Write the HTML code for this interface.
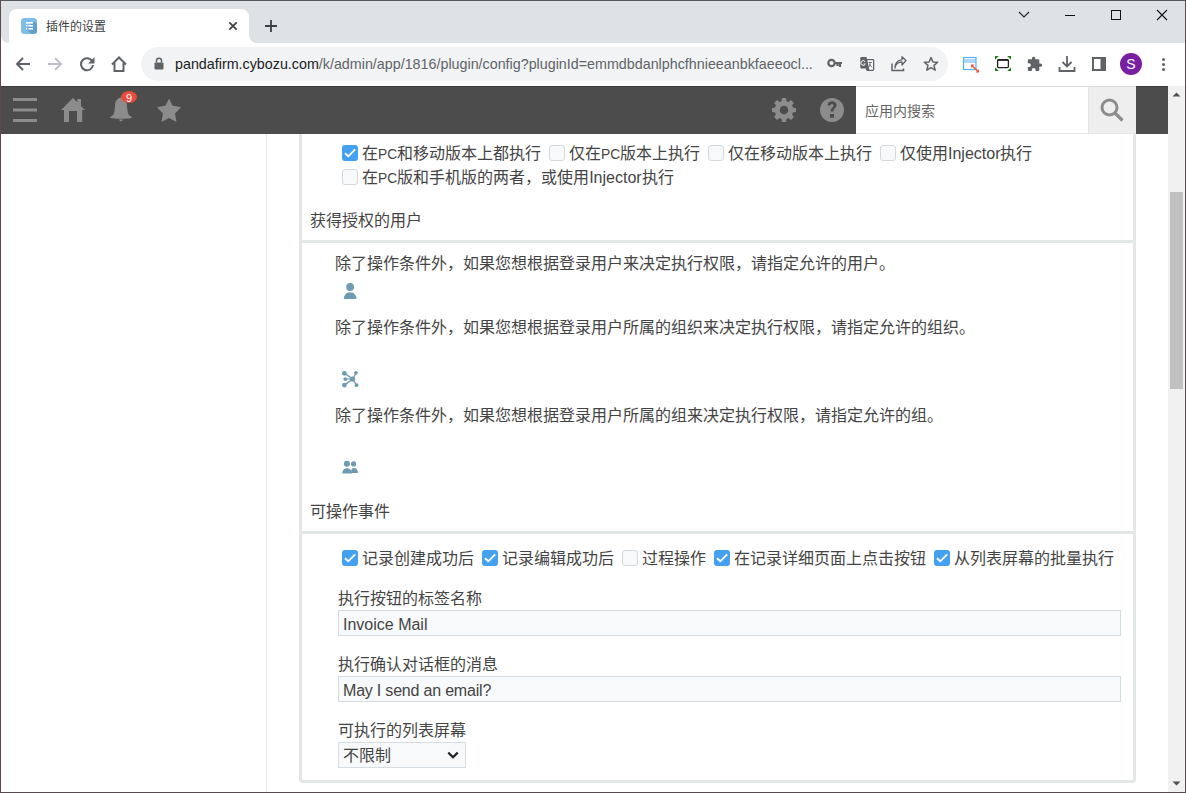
<!DOCTYPE html>
<html lang="zh-CN"><head><meta charset="utf-8">
<style>
*{margin:0;padding:0;box-sizing:border-box}
html,body{width:1186px;height:793px;overflow:hidden;background:#fff;font-family:"Liberation Sans",sans-serif;color:#333}
.a{position:absolute}
#frame{position:absolute;left:0;top:0;width:1186px;height:793px;border:1px solid #5e4a4a;border-top-color:#565a5c;pointer-events:none;z-index:50}
#tabstrip{position:absolute;left:0;top:0;width:1186px;height:43px;background:#dee1e6}
#tab{position:absolute;left:9px;top:9px;width:240px;height:34px;background:#fff;border-radius:8px 8px 0 0}
.tabfl{position:absolute;top:34px;width:8px;height:8px;background:#fff}
.tabfl:after{content:"";position:absolute;left:0;top:0;width:8px;height:8px;background:#dee1e6}
#toolbar{position:absolute;left:0;top:43px;width:1186px;height:43px;background:#fff}
#omni{position:absolute;left:141px;top:47px;width:807px;height:34px;background:#f1f3f4;border-radius:17px}
#url{position:absolute;left:175px;top:56px;font-size:14.3px;color:#202124;white-space:nowrap;letter-spacing:0}
#url span{color:#5f6368}
#kh{position:absolute;z-index:4;left:0;top:86px;width:1168px;height:48px;background:#4c4c4c;border-top:1px solid #3c3c3c}
#search{position:absolute;z-index:4;left:856px;top:86px;width:232px;height:48px;background:#fff;border-top:1px solid #d9dcde;border-bottom:1px solid #e3e7e8}
#sbtn{position:absolute;z-index:4;left:1088px;top:86px;width:48px;height:48px;background:#eeeeee;border-left:1px solid #e3e6e8;border-top:1px solid #d9dcde;border-bottom:1px solid #e3e7e8}
#scroll{position:absolute;left:1168px;top:86px;width:17px;height:707px;background:#f1f1f1}
#thumb{position:absolute;left:1170px;top:192px;width:13px;height:197px;background:#c1c1c1}
#side{position:absolute;left:266px;top:134px;width:1px;height:659px;background:#e6e9ea}
.pbox{position:absolute;border:3px solid #e3e7e8;background:#fff}
.t{position:absolute;margin-top:1px;font-size:16px;white-space:nowrap;line-height:20px;color:#444}
.cb{position:absolute;width:16px;height:16px;border-radius:3px}
.cb.on{background:#44a0f0}
.pc{font-size:13.8px}
.cb svg{position:absolute;left:0;top:0}
.cb.off{background:#f7f9fb;border:1px solid #d3d9dd}
.inp{position:absolute;left:338px;width:783px;height:26px;background:#f7f9fa;border:1px solid #d5dde2}
</style></head><body>
<div id="tabstrip"></div>
<div id="tab"></div>
<svg class="a" style="left:1px;top:35px" width="8" height="8"><path d="M0 0 H0 V8 H8 A8 8 0 0 1 0 0Z" fill="#fff"/></svg>
<svg class="a" style="left:249px;top:35px" width="8" height="8"><path d="M8 8 H0 V0 A8 8 0 0 0 8 8Z" fill="#fff"/></svg>
<svg class="a" style="left:21px;top:18px" width="16" height="16" viewBox="0 0 16 16"><rect x="0" y="0" width="16" height="16" rx="3.5" fill="#7dbde8"/><path d="M5 11 L13 3 L16 6 V12.5 A3.5 3.5 0 0 1 12.5 16 H10 Z" fill="#5d9dcb" opacity="0.9"/><rect x="5" y="4" width="7" height="1.6" fill="#fff"/><rect x="5" y="7" width="1.4" height="1.6" fill="#fff"/><rect x="7.4" y="7" width="4.6" height="1.6" fill="#fff"/><rect x="5" y="10" width="1.4" height="1.6" fill="#fff"/><rect x="7.4" y="10" width="4.6" height="1.6" fill="#fff"/></svg>
<div class="a" style="left:46px;top:19px;font-size:12px;line-height:16px;color:#3c4043;white-space:nowrap">插件的设置</div>
<svg class="a" style="left:226px;top:19px" width="14" height="14" viewBox="0 0 14 14"><path d="M3.3 3.3 L10.7 10.7 M10.7 3.3 L3.3 10.7" stroke="#3c4043" stroke-width="1.7"/></svg>
<svg class="a" style="left:263px;top:18px" width="16" height="16" viewBox="0 0 16 16"><path d="M8 2 V14 M2 8 H14" stroke="#3c4043" stroke-width="1.8"/></svg>
<svg class="a" style="left:1017px;top:10px" width="14" height="10" viewBox="0 0 14 10"><path d="M2 2 L7 7 L12 2" stroke="#202124" stroke-width="1.1" fill="none"/></svg>
<div class="a" style="left:1065px;top:15px;width:10px;height:1px;background:#111"></div>
<div class="a" style="left:1111px;top:10px;width:10px;height:10px;border:1px solid #111"></div>
<svg class="a" style="left:1156px;top:9px" width="12" height="12" viewBox="0 0 12 12"><path d="M1 1 L11 11 M11 1 L1 11" stroke="#111" stroke-width="1.1"/></svg>
<div id="toolbar"></div>
<svg class="a" style="left:15px;top:56px" width="16" height="16" viewBox="0 0 16 16"><path d="M15 8 H2.5 M8 2 L2 8 L8 14" stroke="#5f6368" stroke-width="2" fill="none"/></svg>
<svg class="a" style="left:47px;top:56px" width="16" height="16" viewBox="0 0 16 16"><path d="M1 8 H13.5 M8 2 L14 8 L8 14" stroke="#bdc1c6" stroke-width="2" fill="none"/></svg>
<svg class="a" style="left:79px;top:56px" width="16" height="16" viewBox="0 0 16 16"><path d="M13.2 5.2 A6 6 0 1 0 14 9" stroke="#5f6368" stroke-width="2" fill="none"/><path d="M15.5 1 V7.5 H9 Z" fill="#5f6368"/></svg>
<svg class="a" style="left:110px;top:55px" width="18" height="18" viewBox="0 0 18 18"><path d="M2 9.5 L9 2.5 L16 9.5 M4.5 8 V16 H13.5 V8" stroke="#5f6368" stroke-width="2" fill="none" stroke-linejoin="miter"/></svg>
<div id="omni"></div>
<svg class="a" style="left:154px;top:57px" width="10" height="13" viewBox="0 0 10 13"><path d="M2.5 5.5 V3.8 A2.5 2.5 0 0 1 7.5 3.8 V5.5" stroke="#5f6368" stroke-width="1.5" fill="none"/><rect x="0.5" y="5.5" width="9" height="7" rx="1" fill="#5f6368"/></svg>
<div id="url">pandafirm.cybozu.com<span>/k/admin/app/1816/plugin/config?pluginId=emmdbdanlphcfhnieeanbkfaeeocl...</span></div>
<svg class="a" style="left:827px;top:56px" width="16" height="16" viewBox="0 0 16 16"><circle cx="4.5" cy="7" r="3.2" stroke="#5f6368" stroke-width="2.2" fill="none"/><path d="M7.5 7 H15 M13 7 V11 M10.5 7 V10" stroke="#5f6368" stroke-width="2.2"/></svg>
<svg class="a" style="left:855px;top:52px" width="25" height="24" viewBox="855 52 25 24"><rect x="866.6" y="59.6" width="7" height="10.8" rx="0.8" fill="#fff" stroke="#5f6368" stroke-width="1.3"/><path d="M861.3 57 H865.8 A1 1 0 0 1 866.8 58 L869.5 70.6 H867 L866 68.6 H861.3 A1 1 0 0 1 860.3 67.6 V58 A1 1 0 0 1 861.3 57Z" fill="#5f6368"/><path d="M865 61.5 A2.3 2.3 0 1 0 865.3 64 H863.5" stroke="#fff" stroke-width="1" fill="none"/><path d="M868.5 62.5 H872 M870.2 62 C870 65 869 67 868 68 M869.5 64 L872 67.5" stroke="#5f6368" stroke-width="0.9" fill="none"/></svg>
<svg class="a" style="left:891px;top:56px" width="16" height="16" viewBox="0 0 16 16"><path d="M1 7.5 V14.5 H12.5 V12.5" stroke="#5f6368" stroke-width="1.5" fill="none"/><path d="M4 12 C4.5 8 7 6 11 6 V9 L15 4.5 L11 0.8 V3.8 C6 4 4 8 4 12Z" fill="none" stroke="#5f6368" stroke-width="1.3" stroke-linejoin="round"/></svg>
<svg class="a" style="left:923px;top:56px" width="16" height="16" viewBox="0 0 16 16"><path d="M8 1.5 L9.9 6 L14.7 6.3 L11 9.4 L12.2 14.2 L8 11.6 L3.8 14.2 L5 9.4 L1.3 6.3 L6.1 6Z" stroke="#5f6368" stroke-width="1.5" fill="none" stroke-linejoin="round"/></svg>
<svg class="a" style="left:962px;top:56px" width="18" height="17" viewBox="0 0 18 17"><rect x="1.5" y="1.5" width="12.5" height="12" fill="#fff" stroke="#58b0f0" stroke-width="1.2"/><path d="M1.5 4 H14 M1.5 6 H14" stroke="#58b0f0" stroke-width="1"/><path d="M10 9.5 L16 15.5" stroke="#f05a40" stroke-width="1.6"/><path d="M9 8.5 H12.5 L9 12Z M17 16.5 H13.5 L17 13Z" fill="#f05a40"/></svg>
<svg class="a" style="left:994px;top:55px" width="18" height="17" viewBox="994 55 18 17"><path d="M995 56 H998.8 L995 59.8Z M1011 56 H1007.2 L1011 59.8Z M995 71 H998.8 L995 67.2Z M1011 71 H1007.2 L1011 67.2Z" fill="#1e7a1e"/><rect x="997.6" y="59.6" width="10.8" height="8" rx="1" stroke="#222" stroke-width="1.3" fill="none"/><path d="M997.6 60.3 H1008.4" stroke="#222" stroke-width="1.2"/></svg>
<svg class="a" style="left:1027px;top:56px" width="16" height="16" viewBox="0 0 16 16"><path d="M13.5 7.5 H12.3 V4.3 A1 1 0 0 0 11.3 3.3 H8.3 V2 A1.7 1.7 0 0 0 5 2 V3.3 H1.8 A1 1 0 0 0 0.8 4.3 V7.2 H2 A1.9 1.9 0 0 1 2 11 H0.8 V14 A1 1 0 0 0 1.8 15 H4.8 V13.8 A1.9 1.9 0 0 1 8.6 13.8 V15 H11.3 A1 1 0 0 0 12.3 14 V10.8 H13.5 A1.65 1.65 0 0 0 13.5 7.5Z" fill="#5f6368"/></svg>
<svg class="a" style="left:1058px;top:55px" width="18" height="18" viewBox="0 0 18 18"><path d="M9 1 V11.5 M4.5 7 L9 11.5 L13.5 7" stroke="#5f6368" stroke-width="1.8" fill="none"/><path d="M1.5 12 V16 H16.5 V12" stroke="#5f6368" stroke-width="1.8" fill="none"/></svg>
<svg class="a" style="left:1092px;top:57px" width="14" height="14" viewBox="0 0 14 14"><rect x="1" y="1" width="12" height="12" fill="none" stroke="#5f6368" stroke-width="2"/><rect x="8.5" y="1" width="4.5" height="12" fill="#5f6368"/></svg>
<div class="a" style="left:1120px;top:53px;width:22px;height:22px;border-radius:50%;background:#7b1fa2;color:#fff;font-size:14px;line-height:22px;text-align:center">S</div>
<div class="a" style="left:1161.5px;top:58px;width:3px;height:3px;border-radius:50%;background:#5f6368"></div>
<div class="a" style="left:1161.5px;top:63px;width:3px;height:3px;border-radius:50%;background:#5f6368"></div>
<div class="a" style="left:1161.5px;top:68px;width:3px;height:3px;border-radius:50%;background:#5f6368"></div>
<div id="kh"></div>
<div id="search"></div>
<div id="sbtn"></div>
<div id="scroll"></div>
<div id="thumb"></div>
<svg class="a" style="left:1168px;top:86px;z-index:6" width="17" height="17"><path d="M4.5 10.5 H12.5 L8.5 6.5Z" fill="#505050"/></svg>
<svg class="a" style="left:1168px;top:775px;z-index:6" width="17" height="17"><path d="M4.5 6.5 H12.5 L8.5 10.5Z" fill="#505050"/></svg>
<div id="side"></div>

<!-- panels -->
<div class="pbox" style="left:299px;top:100px;width:837px;height:143px"></div>
<div class="pbox" style="left:299px;top:240px;width:837px;height:294px"></div>
<div class="pbox" style="left:299px;top:531px;width:837px;height:252px;border-radius:0 0 4px 4px"></div>

<svg class="a" style="left:0;top:86px;z-index:5" width="1168" height="48" viewBox="0 86 1168 48">
<rect x="13" y="98" width="24" height="3" fill="#8c8c8c"/>
<rect x="13" y="108.5" width="24" height="3" fill="#8c8c8c"/>
<rect x="13" y="119" width="24" height="3" fill="#8c8c8c"/>
<path d="M61 110 L73 98 L77.3 102.3 V99 H81 V106 L85 110 H82.2 V122 H77 V111 H69 V122 H64 V110 Z" fill="#8c8c8c"/>
<path d="M121 97.5 C124 98 126.5 100.5 126.8 104 C127.2 108 127.3 112 128.5 114.5 C129.5 116 132 116.5 132 117.5 C132 118.3 127 118.8 121 118.8 C115 118.8 110 118.3 110 117.5 C110 116.5 112.5 116 113.5 114.5 C114.7 112 114.8 108 115.2 104 C115.5 100.5 118 98 121 97.5Z" fill="#8c8c8c"/>
<path d="M118.5 119.5 H123.5 L121 121.8Z" fill="#8c8c8c"/>
<ellipse cx="129" cy="97" rx="8" ry="6" fill="#e74c3c"/>
<text x="129" y="101.5" font-size="11" fill="#fff" text-anchor="middle" font-family="Liberation Sans">9</text>
<path d="M169 98.4 L172.4 105.4 L181 107.2 L175 113.4 L176.5 122 L169 118.1 L161.5 122 L163 113.4 L157 107.2 L165.6 105.4Z" fill="#8c8c8c"/>
<g transform="translate(784 110)" fill="#8c8c8c">
<circle r="9.3"/>
<g id="tooth"><rect x="-2.3" y="-12" width="4.6" height="5" rx="1"/></g>
<use href="#tooth" transform="rotate(45)"/><use href="#tooth" transform="rotate(90)"/><use href="#tooth" transform="rotate(135)"/><use href="#tooth" transform="rotate(180)"/><use href="#tooth" transform="rotate(225)"/><use href="#tooth" transform="rotate(270)"/><use href="#tooth" transform="rotate(315)"/>
<circle r="4.3" fill="#4c4c4c"/>
</g>
<circle cx="832" cy="110" r="12" fill="#8c8c8c"/>
<path d="M827.5 105.5 C827.5 102.8 829.5 101.3 832 101.3 C834.8 101.3 836.6 103 836.6 105.3 C836.6 107.8 833.6 108.3 833.4 111.5 H830.6 C830.6 107.6 833.4 107.4 833.4 105.4 C833.4 104.6 832.8 104 832 104 C831.1 104 830.5 104.7 830.5 105.5Z" fill="#4c4c4c"/>
<rect x="830" y="114" width="4" height="3.7" fill="#4c4c4c"/>
</svg>
<svg class="a" style="left:1094px;top:92px;z-index:5" width="36" height="36" viewBox="0 0 36 36"><circle cx="15.5" cy="15.5" r="7.5" stroke="#8c8c8c" stroke-width="3" fill="none"/><path d="M21 21 L28.5 28.5" stroke="#8c8c8c" stroke-width="3.2"/></svg>
<div class="t" style="left:865px;top:100px;font-size:14px;color:#666;z-index:5">应用内搜索</div>

<div class="cb on" style="left:342px;top:145px"><svg width="16" height="16"><path d="M3 8.2 L6.3 11.3 L13.2 4.4" stroke="#fff" stroke-width="1.9" fill="none"/></svg></div>
<div class="t" style="left:362px;top:143px">在<span class="pc">PC</span>和移动版本上都执行</div>
<div class="cb off" style="left:549px;top:145px"></div>
<div class="t" style="left:569px;top:143px">仅在<span class="pc">PC</span>版本上执行</div>
<div class="cb off" style="left:708px;top:145px"></div>
<div class="t" style="left:728px;top:143px">仅在移动版本上执行</div>
<div class="cb off" style="left:880px;top:145px"></div>
<div class="t" style="left:900px;top:143px">仅使用Injector执行</div>
<div class="cb off" style="left:342px;top:169px"></div>
<div class="t" style="left:362px;top:167px">在<span class="pc">PC</span>版和手机版的两者，或使用Injector执行</div>

<div class="t" style="left:310px;top:210px">获得授权的用户</div>
<div class="t" style="left:335px;top:253px">除了操作条件外，如果您想根据登录用户来决定执行权限，请指定允许的用户。</div>
<div class="t" style="left:335px;top:317px">除了操作条件外，如果您想根据登录用户所属的组织来决定执行权限，请指定允许的组织。</div>
<div class="t" style="left:335px;top:405px">除了操作条件外，如果您想根据登录用户所属的组来决定执行权限，请指定允许的组。</div>

<svg class="a" style="left:338px;top:280px" width="24" height="24" viewBox="338 280 24 24" fill="#6f9bb0">
<circle cx="350.1" cy="287" r="3.9"/>
<path d="M343.8 299 C343.8 295 346.5 292.2 350.1 292.2 C353.7 292.2 356.5 295 356.5 299Z"/>
</svg>
<svg class="a" style="left:338px;top:367px" width="24" height="24" viewBox="338 367 24 24" fill="#6f9bb0" stroke="#6f9bb0" stroke-width="1.3">
<path d="M344.4 373.3 L352.8 379 L345.2 379.1 M344.4 385.1 L352.8 379 L356 372.8 M352.8 379 L356.5 385.2" fill="none"/>
<circle cx="352.6" cy="379" r="2.6" stroke="none"/>
<circle cx="344.4" cy="373.3" r="2.4" stroke="none"/>
<circle cx="345.2" cy="379.1" r="1.9" stroke="none"/>
<circle cx="344.4" cy="385.1" r="2.4" stroke="none"/>
<circle cx="356" cy="372.8" r="1.9" stroke="none"/>
<circle cx="356.5" cy="385.2" r="1.9" stroke="none"/>
</svg>
<svg class="a" style="left:338px;top:455px" width="24" height="24" viewBox="338 455 24 24" fill="#6f9bb0">
<circle cx="353.6" cy="463.9" r="2.6"/>
<path d="M351 473 C351 469.5 352 468 353.8 468 C356.5 468 358 470 358 473Z"/>
<circle cx="346.9" cy="463.8" r="3"/>
<path d="M342.2 473.5 C342.2 470.3 344.2 468.2 347 468.2 C349.9 468.2 352 470.3 352 473.5Z" stroke="#fff" stroke-width="0"/>
</svg>
<div class="t" style="left:310px;top:501px">可操作事件</div>

<div class="cb on" style="left:342px;top:550px"><svg width="16" height="16"><path d="M3 8.2 L6.3 11.3 L13.2 4.4" stroke="#fff" stroke-width="1.9" fill="none"/></svg></div>
<div class="t" style="left:362px;top:548px">记录创建成功后</div>
<div class="cb on" style="left:482px;top:550px"><svg width="16" height="16"><path d="M3 8.2 L6.3 11.3 L13.2 4.4" stroke="#fff" stroke-width="1.9" fill="none"/></svg></div>
<div class="t" style="left:502px;top:548px">记录编辑成功后</div>
<div class="cb off" style="left:622px;top:550px"></div>
<div class="t" style="left:642px;top:548px">过程操作</div>
<div class="cb on" style="left:714px;top:550px"><svg width="16" height="16"><path d="M3 8.2 L6.3 11.3 L13.2 4.4" stroke="#fff" stroke-width="1.9" fill="none"/></svg></div>
<div class="t" style="left:734px;top:548px">在记录详细页面上点击按钮</div>
<div class="cb on" style="left:934px;top:550px"><svg width="16" height="16"><path d="M3 8.2 L6.3 11.3 L13.2 4.4" stroke="#fff" stroke-width="1.9" fill="none"/></svg></div>
<div class="t" style="left:954px;top:548px">从列表屏幕的批量执行</div>

<div class="t" style="left:338px;top:588px">执行按钮的标签名称</div>
<div class="inp" style="top:610px"></div>
<div class="t" style="left:343px;top:614px">Invoice Mail</div>
<div class="t" style="left:338px;top:654px">执行确认对话框的消息</div>
<div class="inp" style="top:676px"></div>
<div class="t" style="left:343px;top:680px;letter-spacing:-0.2px">May I send an email?</div>
<div class="t" style="left:338px;top:720px">可执行的列表屏幕</div>
<div class="a" style="left:338px;top:742px;width:128px;height:26px;background:#f7f9fa;border:1px solid #d5dde2"></div>
<div class="t" style="left:343px;top:745px">不限制</div>
<svg class="a" style="left:446px;top:750px" width="14" height="11" viewBox="0 0 14 11"><path d="M2.3 2.6 L7 7.3 L11.7 2.6" stroke="#222" stroke-width="2.2" fill="none"/></svg>

<div id="frame"></div>
</body></html>
